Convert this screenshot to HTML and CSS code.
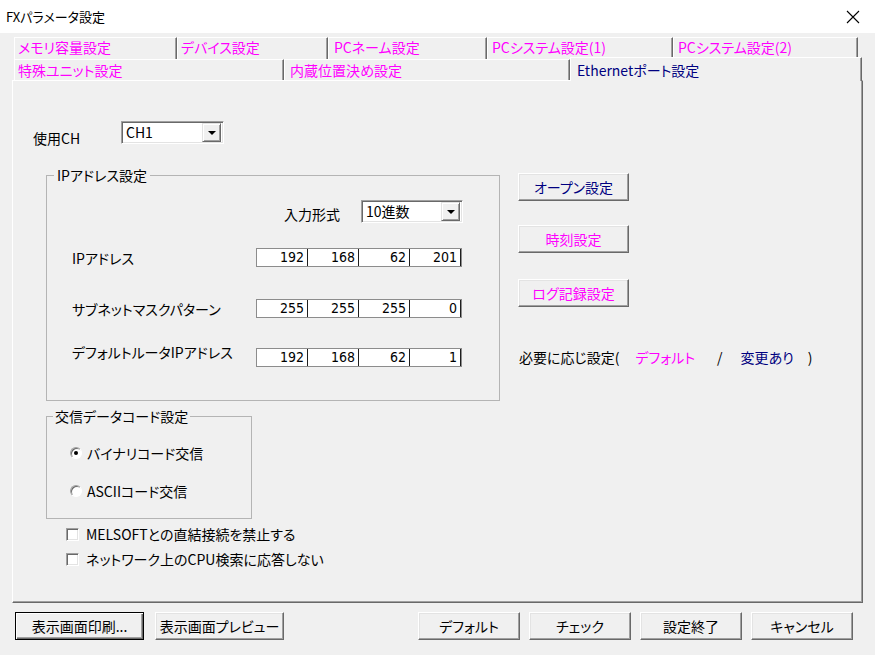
FILE: index.html
```html
<!DOCTYPE html>
<html lang="ja">
<head>
<meta charset="utf-8">
<title>FXパラメータ設定</title>
<link rel="stylesheet" href="styles.css">
</head>
<body>
<div class="titlebar">
  <span class="title">FXパラメータ設定</span>
  <svg class="close" width="14" height="14" viewBox="0 0 14 14"><path d="M1 1L13 13M13 1L1 13" stroke="#000" stroke-width="1.1" fill="none"/></svg>
</div>
<div class="tabs">
  <div class="tab-row row1">
    <div class="tab t1">メモリ容量設定</div>
    <div class="tab t2">デバイス設定</div>
    <div class="tab t3">PCネーム設定</div>
    <div class="tab t4">PCシステム設定(1)</div>
    <div class="tab t5">PCシステム設定(2)</div>
  </div>
  <div class="tab-row row2">
    <div class="tab t6">特殊ユニット設定</div>
    <div class="tab t7">内蔵位置決め設定</div>
    <div class="tab t8 tab-sel">Ethernetポート設定</div>
  </div>
</div>
<div class="panel">
  <div class="ch-row">
    <span class="ch-label">使用CH</span>
    <div class="combo combo-ch"><span class="combo-text">CH1</span><span class="combo-btn"><span class="tri"></span></span></div>
  </div>
  <div class="main-row">
    <div class="group group-ip">
      <span class="group-title">IPアドレス設定</span>
      <div class="format-row">
        <span class="format-label">入力形式</span>
        <div class="combo combo-fmt"><span class="combo-text">10進数</span><span class="combo-btn"><span class="tri"></span></span></div>
      </div>
      <div class="ip-row r1">
        <span class="ip-label">IPアドレス</span>
        <div class="ip-box"><span class="ip-cell">192</span><span class="ip-cell">168</span><span class="ip-cell">62</span><span class="ip-cell">201</span></div>
      </div>
      <div class="ip-row r2">
        <span class="ip-label">サブネットマスクパターン</span>
        <div class="ip-box"><span class="ip-cell">255</span><span class="ip-cell">255</span><span class="ip-cell">255</span><span class="ip-cell">0</span></div>
      </div>
      <div class="ip-row r3">
        <span class="ip-label raised">デフォルトルータIPアドレス</span>
        <div class="ip-box"><span class="ip-cell">192</span><span class="ip-cell">168</span><span class="ip-cell">62</span><span class="ip-cell">1</span></div>
      </div>
    </div>
    <div class="side">
      <button class="btn side-btn navy">オープン設定</button>
      <button class="btn side-btn magenta s2">時刻設定</button>
      <button class="btn side-btn magenta s3">ログ記録設定</button>
      <div class="note">
        <span>必要に応じ設定(</span>
        <span class="magenta n1">デフォルト</span>
        <span class="n2">/</span>
        <span class="navy n3">変更あり</span>
        <span class="n4">)</span>
      </div>
    </div>
  </div>
  <div class="group group-code">
    <span class="group-title">交信データコード設定</span>
    <div class="radio-row rr1"><span class="radio"><span class="dot"></span></span><span class="radio-text">バイナリコード交信</span></div>
    <div class="radio-row rr2"><span class="radio"></span><span class="radio-text">ASCIIコード交信</span></div>
  </div>
  <div class="checks">
    <div class="check-row"><span class="checkbox"></span><span class="check-text">MELSOFTとの直結接続を禁止する</span></div>
    <div class="check-row c2"><span class="checkbox"></span><span class="check-text">ネットワーク上のCPU検索に応答しない</span></div>
  </div>
</div>
<div class="footer">
  <button class="btn fbtn wide default">表示画面印刷...</button>
  <button class="btn fbtn wide f2">表示画面プレビュー</button>
  <button class="btn fbtn f3">デフォルト</button>
  <button class="btn fbtn f4">チェック</button>
  <button class="btn fbtn f4">設定終了</button>
  <button class="btn fbtn f4">キャンセル</button>
</div>
</body>
</html>
```
FILE: styles.css
```css
html, body {
  margin: 0;
  padding: 0;
}
body {
  width: 875px;
  height: 655px;
  overflow: hidden;
  background: #f0f0f0;
  font-family: "Noto Sans CJK JP", "Noto Sans", sans-serif;
  font-size: 14px;
  line-height: 16px;
  color: #000;
  font-feature-settings: "palt";
}

.titlebar {
  height: 33px;
  background: #fff;
  display: flex;
  align-items: center;
  justify-content: space-between;
  padding: 0 15px 0 6px;
  box-sizing: border-box;
}
.title {
  font-size: 13px;
}

.tabs {
  margin: 4px 0 0 14px;
}
.tab-row {
  display: flex;
}
.row1 { height: 22px; }
.row2 { height: 21px; }
.tab {
  box-sizing: border-box;
  height: 100%;
  border-top: 1px solid #fff;
  border-left: 1px solid #fff;
  border-right: 1px solid #696969;
  box-shadow: inset -1px 0 #a0a0a0;
  padding: 1px 0 0 3px;
  color: #ff00ff;
  white-space: nowrap;
  background: #f0f0f0;
}
.row2 .tab { padding-top: 2px; }
.t1 { width: 163px; }
.t2 { width: 151px; }
.t3 { width: 159px; padding-left: 5px; }
.t4 { width: 186px; padding-left: 4px; }
.t5 { width: 185px; padding-left: 4px; }
.t6 { width: 270px; }
.t7 { width: 286px; padding-left: 5px; }
.t8 { width: 292px; padding-left: 6px; }
.row2 .tab-sel {
  height: 24px;
  margin-top: -2px;
  padding-top: 4px;
  color: #000080;
  position: relative;
  z-index: 1;
}

.panel {
  box-sizing: border-box;
  width: 851px;
  height: 523px;
  margin-left: 12px;
  border: 1px solid;
  border-color: #fff #696969 #696969 #fff;
  box-shadow: inset -1px -1px #a0a0a0;
}

.ch-row {
  display: flex;
  align-items: flex-start;
  height: 23px;
  margin: 40px 0 0 20px;
}
.ch-label {
  width: 88px;
  padding-top: 9px;
}

.combo {
  box-sizing: border-box;
  height: 23px;
  display: flex;
  align-items: center;
  justify-content: space-between;
  background: #fff;
  border: 1px solid;
  border-color: #a0a0a0 #fff #fff #a0a0a0;
  box-shadow: inset 1px 1px #696969, inset -1px -1px #e3e3e3;
  padding: 0 2px 0 4px;
}
.combo-ch { width: 103px; }
.combo-fmt { width: 102px; }
.combo-text {
  align-self: flex-start;
  padding-top: 2px;
}
.combo-btn {
  box-sizing: border-box;
  width: 19px;
  height: 19px;
  background: #f0f0f0;
  border: 1px solid;
  border-color: #e3e3e3 #696969 #696969 #e3e3e3;
  box-shadow: inset 1px 1px #fff, inset -1px -1px #a0a0a0;
  display: flex;
  align-items: center;
  justify-content: center;
}
.tri {
  width: 0;
  height: 0;
  border-left: 4px solid transparent;
  border-right: 4px solid transparent;
  border-top: 4px solid #000;
}

.main-row {
  display: flex;
  align-items: flex-start;
  margin: 29px 0 0 33px;
}

.group {
  position: relative;
  box-sizing: border-box;
  border: 1px solid #b4b4b4;
}
.group-title {
  position: absolute;
  top: -9px;
  left: 7px;
  padding: 0 3px;
  background: #f0f0f0;
  white-space: nowrap;
}
.group-ip {
  width: 454px;
  height: 226px;
  margin-top: 2px;
  flex-shrink: 0;
}

.format-row {
  display: flex;
  align-items: center;
  height: 23px;
  margin: 24px 0 0 237px;
}
.format-label {
  width: 77px;
  padding-top: 4px;
}

.ip-row {
  display: flex;
  align-items: center;
  height: 19px;
  margin-left: 25px;
}
.r1 { margin-top: 25px; }
.r2 { margin-top: 32px; }
.r3 { margin-top: 30px; }
.ip-label {
  width: 184px;
  white-space: nowrap;
}
.ip-label.raised {
  margin-bottom: 11px;
}
.ip-box {
  box-sizing: border-box;
  width: 206px;
  height: 19px;
  display: flex;
  background: #fff;
  border: 1px solid #8c8c8c;
}
.ip-cell {
  box-sizing: border-box;
  width: 51px;
  height: 100%;
  border-right: 1px solid #1e1e1e;
  text-align: right;
  padding-right: 3px;
  font-family: "DejaVu Sans Condensed", "DejaVu Sans", sans-serif;
  font-stretch: condensed;
  font-size: 14px;
  line-height: 17px;
}

.side {
  display: flex;
  flex-direction: column;
  align-items: flex-start;
  margin-left: 18px;
}
.btn {
  box-sizing: border-box;
  font: inherit;
  font-feature-settings: "palt";
  background: #f0f0f0;
  border: 1px solid;
  border-color: #fff #696969 #696969 #fff;
  box-shadow: inset -1px -1px #a0a0a0, inset 1px 1px #e3e3e3;
  padding: 0;
  color: #000;
  white-space: nowrap;
}
.side-btn {
  width: 111px;
  height: 28px;
}
.s2 { margin-top: 24px; }
.s3 { margin-top: 26px; }
.navy { color: #000080; }
.magenta { color: #ff00ff; }

.note {
  display: flex;
  margin-top: 42px;
  margin-left: 1px;
  white-space: nowrap;
}
.n1 { margin-left: 16px; }
.n2 { margin-left: 22px; }
.n3 { margin-left: 18px; }
.n4 { margin-left: 14px; }

.group-code {
  width: 206px;
  height: 103px;
  margin: 15px 0 0 33px;
}
.group-code .group-title {
  left: 6px;
  padding: 0 2px;
}
.radio-row {
  display: flex;
  align-items: center;
  margin-left: 23px;
}
.rr1 { margin-top: 28px; }
.rr2 { margin-top: 22px; }
.radio {
  box-sizing: border-box;
  width: 12px;
  height: 12px;
  border-radius: 50%;
  background: #fff;
  border: 1px solid;
  border-color: #a0a0a0 #fff #fff #a0a0a0;
  box-shadow: inset 1px 1px #696969;
  display: flex;
  align-items: center;
  justify-content: center;
}
.dot {
  width: 4px;
  height: 4px;
  border-radius: 50%;
  background: #000;
}
.radio-text {
  margin-left: 5px;
}

.checks {
  margin: 7px 0 0 53px;
}
.check-row {
  display: flex;
  align-items: center;
}
.c2 { margin-top: 9px; }
.checkbox {
  box-sizing: border-box;
  width: 13px;
  height: 13px;
  background: #fff;
  border: 1px solid;
  border-color: #a0a0a0 #fff #fff #a0a0a0;
  box-shadow: inset 1px 1px #696969, inset -1px -1px #e3e3e3;
}
.check-text {
  margin-left: 7px;
}

.footer {
  display: flex;
  margin: 9px 0 0 15px;
}
.fbtn {
  width: 102px;
  height: 28px;
}
.fbtn.wide { width: 129px; }
.fbtn.default {
  border: 1px solid #000;
  box-shadow: inset 1px 1px #fff, inset -1px -1px #696969, inset -2px -2px #a0a0a0;
}
.f2 { margin-left: 11px; }
.f3 { margin-left: 134px; }
.f4 { margin-left: 9px; }
```
